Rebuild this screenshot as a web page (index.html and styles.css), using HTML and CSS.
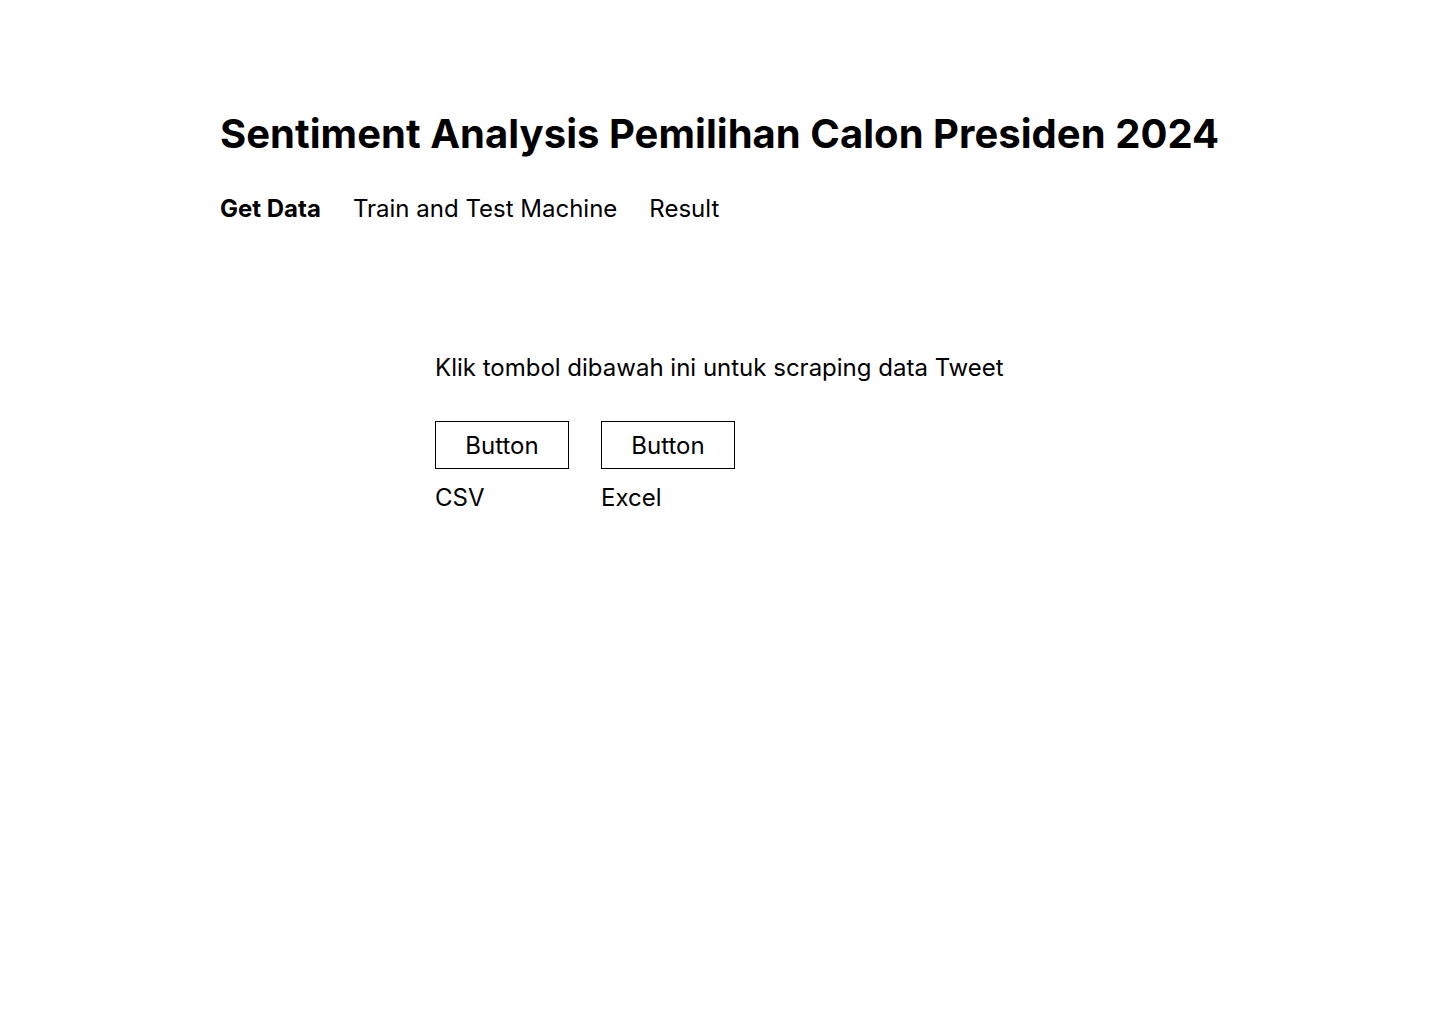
FILE: index.html
```html
<!DOCTYPE html>
<html lang="id">
<head>
<meta charset="utf-8">
<title>Sentiment Analysis Pemilihan Calon Presiden 2024</title>
<link rel="stylesheet" href="styles.css">
</head>
<body>
<div class="page">
  <h1 class="title">Sentiment Analysis Pemilihan Calon Presiden 2024</h1>
  <nav class="nav">
    <a class="nav-item active">Get Data</a>
    <a class="nav-item">Train and Test Machine</a>
    <a class="nav-item">Result</a>
  </nav>
  <section class="content">
    <p class="intro">Klik tombol dibawah ini untuk scraping data Tweet</p>
    <div class="actions">
      <div class="action">
        <button class="btn">Button</button>
        <span class="label">CSV</span>
      </div>
      <div class="action">
        <button class="btn">Button</button>
        <span class="label">Excel</span>
      </div>
    </div>
  </section>
</div>
</body>
</html>
```

FILE: styles.css
```css
html, body {
  margin: 0;
  padding: 0;
  background: #ffffff;
}
body {
  font-family: Inter, "Noto Sans", sans-serif;
  color: #000000;
}
.page {
  padding: 110px 220px 0 220px;
}
.title {
  margin: 0;
  font-size: 40px;
  line-height: 48px;
  font-weight: 700;
  letter-spacing: 0.04px;
}
.nav {
  display: flex;
  gap: 32px;
  margin-top: 35px;
}
.nav-item {
  font-size: 24px;
  line-height: 32px;
  font-weight: 400;
  color: #000;
}
.nav-item.active {
  font-weight: 700;
}
.content {
  margin-top: 127px;
  padding-left: 215px;
}
.intro {
  margin: 0;
  font-size: 24px;
  line-height: 32px;
}
.actions {
  display: flex;
  gap: 32px;
  margin-top: 37px;
}
.action {
  display: flex;
  flex-direction: column;
  gap: 13px;
  align-items: flex-start;
}
.btn {
  font-family: inherit;
  font-size: 24px;
  line-height: 32px;
  color: #000;
  background: #fff;
  border: 1px solid #000;
  border-radius: 0;
  padding: 8px 0 6px 0;
  width: 134px;
  margin: 0;
}
.label {
  font-size: 24px;
  line-height: 32px;
}
```
